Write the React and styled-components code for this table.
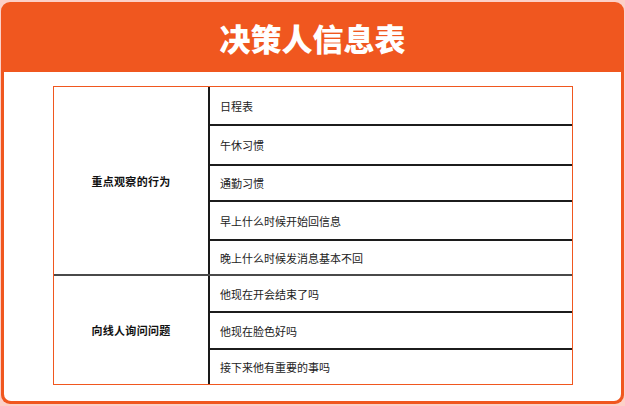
import React from "react";
import styled, { createGlobalStyle } from "styled-components";

const GlobalStyle = createGlobalStyle`
  html, body {
    margin: 0;
    padding: 0;
    background: #fcd0c8;
  }
  body {
    font-family: "Noto Sans CJK SC", "Noto Sans", sans-serif;
  }
`;

// row heights taken from the reference layout
const groups = [
  {
    label: "重点观察的行为",
    items: [
      ["日程表", 37],
      ["午休习惯", 38],
      ["通勤习惯", 34],
      ["早上什么时候开始回信息", 37],
      ["晚上什么时候发消息基本不回", 33]
    ]
  },
  {
    label: "向线人询问问题",
    items: [
      ["他现在开会结束了吗", 35],
      ["他现在脸色好吗", 35],
      ["接下来他有重要的事吗", 34]
    ]
  }
];

const Page = styled.div`
  width: 625px;
  height: 406px;
  box-sizing: border-box;
  padding: 2px 1px 2px 1px;
`;

const Card = styled.div`
  height: 100%;
  box-sizing: border-box;
  background: #f0571f;
  border-radius: 9px;
  padding: 0 3px 3px 3px;
  display: flex;
  flex-direction: column;
`;

const Header = styled.div`
  height: 70px;
  flex-shrink: 0;
  display: flex;
  align-items: center;
  justify-content: center;
  color: #fff;
  font-size: 31px;
  font-weight: 900;
  padding-top: 1px;
  box-sizing: border-box;
`;

const Body = styled.div`
  flex: 1;
  background: #fff;
  border-radius: 0 0 7px 7px;
  padding: 14px 0 0 49px;
`;

const Table = styled.div`
  width: 520px;
  box-sizing: border-box;
  border: 1px solid #f0571f;
  display: flex;
  flex-direction: column;
`;

const Group = styled.div`
  display: grid;
  grid-template-columns: 156px 1fr;
  border-top: ${(p) => (p.$first ? "none" : "2px solid #4a4a4a")};
`;

const Label = styled.div`
  display: flex;
  align-items: center;
  justify-content: center;
  font-size: 11px;
  font-weight: 700;
  letter-spacing: 0.3px;
  color: #111;
  border-right: 2px solid #1a1a1a;
`;

const Items = styled.div`
  display: flex;
  flex-direction: column;
`;

const Item = styled.div`
  display: flex;
  align-items: center;
  padding-left: 10px;
  font-size: 11px;
  color: #222;
  border-top: ${(p) => (p.$first ? "none" : "2px solid #1c1c1c")};
`;

export default function App() {
  return (
    <>
      <GlobalStyle />
      <Page>
        <Card>
          <Header>决策人信息表</Header>
          <Body>
            <Table>
              {groups.map((g, gi) => (
                <Group key={g.label} $first={gi === 0}>
                  <Label>{g.label}</Label>
                  <Items>
                    {g.items.map(([text, h], i) => (
                      <Item key={text} $first={i === 0} style={{ height: h }}>
                        {text}
                      </Item>
                    ))}
                  </Items>
                </Group>
              ))}
            </Table>
          </Body>
        </Card>
      </Page>
    </>
  );
}
